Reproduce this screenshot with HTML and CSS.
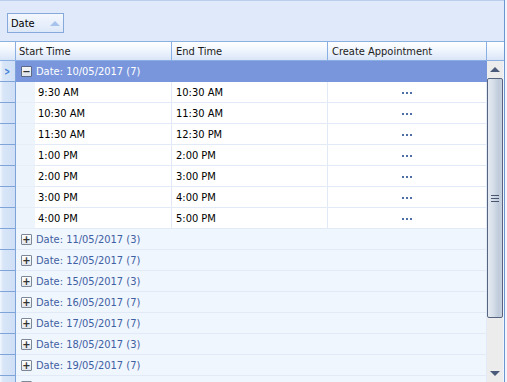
FILE: index.html
```html
<!DOCTYPE html>
<html>
<head>
<meta charset="utf-8">
<link rel="stylesheet" href="styles.css">
</head>
<body>
<div class="grid">
  <div class="group-panel">
    <div class="group-btn"><span>Date</span><span class="tri-up"></span></div>
  </div>
  <div class="header">
    <div class="hcell ind"></div>
    <div class="hcell c1">Start Time</div>
    <div class="hcell c2">End Time</div>
    <div class="hcell c3">Create Appointment</div>
    <div class="hcell sc"></div>
  </div>
  <div class="body">
    <div class="rows">
      <div class="row grp open">
        <div class="ind"><span class="arrow">&gt;</span></div>
        <div class="gcell"><span class="box">&minus;</span>Date: 10/05/2017 (7)</div>
      </div>
      <div class="row data"><div class="ind"></div><div class="indent"></div><div class="dc c1">9:30 AM</div><div class="dc c2">10:30 AM</div><div class="dc c3"><span class="dots"><i></i><i></i><i></i></span></div></div>
      <div class="row data"><div class="ind"></div><div class="indent"></div><div class="dc c1">10:30 AM</div><div class="dc c2">11:30 AM</div><div class="dc c3"><span class="dots"><i></i><i></i><i></i></span></div></div>
      <div class="row data"><div class="ind"></div><div class="indent"></div><div class="dc c1">11:30 AM</div><div class="dc c2">12:30 PM</div><div class="dc c3"><span class="dots"><i></i><i></i><i></i></span></div></div>
      <div class="row data"><div class="ind"></div><div class="indent"></div><div class="dc c1">1:00 PM</div><div class="dc c2">2:00 PM</div><div class="dc c3"><span class="dots"><i></i><i></i><i></i></span></div></div>
      <div class="row data"><div class="ind"></div><div class="indent"></div><div class="dc c1">2:00 PM</div><div class="dc c2">3:00 PM</div><div class="dc c3"><span class="dots"><i></i><i></i><i></i></span></div></div>
      <div class="row data"><div class="ind"></div><div class="indent"></div><div class="dc c1">3:00 PM</div><div class="dc c2">4:00 PM</div><div class="dc c3"><span class="dots"><i></i><i></i><i></i></span></div></div>
      <div class="row data"><div class="ind"></div><div class="indent"></div><div class="dc c1">4:00 PM</div><div class="dc c2">5:00 PM</div><div class="dc c3"><span class="dots"><i></i><i></i><i></i></span></div></div>
      <div class="row grp"><div class="ind"></div><div class="gcell"><span class="box">+</span>Date: 11/05/2017 (3)</div></div>
      <div class="row grp"><div class="ind"></div><div class="gcell"><span class="box">+</span>Date: 12/05/2017 (7)</div></div>
      <div class="row grp"><div class="ind"></div><div class="gcell"><span class="box">+</span>Date: 15/05/2017 (3)</div></div>
      <div class="row grp"><div class="ind"></div><div class="gcell"><span class="box">+</span>Date: 16/05/2017 (7)</div></div>
      <div class="row grp"><div class="ind"></div><div class="gcell"><span class="box">+</span>Date: 17/05/2017 (7)</div></div>
      <div class="row grp"><div class="ind"></div><div class="gcell"><span class="box">+</span>Date: 18/05/2017 (3)</div></div>
      <div class="row grp"><div class="ind"></div><div class="gcell"><span class="box">+</span>Date: 19/05/2017 (7)</div></div>
      <div class="row grp"><div class="ind"></div><div class="gcell"><span class="box"></span></div></div>
    </div>
    <div class="vscroll">
      <div class="sbtn"><span class="up"></span></div>
      <div class="thumb"><span class="grip"><i></i><i></i><i></i></span></div>
      <div class="track"></div>
      <div class="sbtn"><span class="down"></span></div>
    </div>
  </div>
</div>
</body>
</html>
```
FILE: styles.css
```css
html, body {
  margin: 0;
  padding: 0;
  width: 507px;
  height: 382px;
  overflow: hidden;
  background: #f2f6fc;
}
.grid {
  width: 504px;
  height: 382px;
  overflow: hidden;
  border-right: 1px solid #6b95cf;
  font-family: "DejaVu Sans Condensed", "DejaVu Sans", sans-serif;
  font-size: 11px;
  color: #000;
  display: flex;
  flex-direction: column;
}
.group-panel {
  height: 41px;
  flex: none;
  border-top: 1px solid #b9cdec;
  background: #dfe9f9;
  padding: 12px 0 0 7px;
  box-sizing: border-box;
}
.group-btn {
  width: 57px;
  height: 20px;
  box-sizing: border-box;
  border: 1px solid #86a9dc;
  background: linear-gradient(#f4f8fe, #dde8f8);
  display: flex;
  align-items: center;
  padding-left: 3px;
  padding-top: 1px;
  gap: 15px;
}
.tri-up {
  width: 0; height: 0;
  border-left: 5px solid transparent;
  border-right: 5px solid transparent;
  border-bottom: 5px solid #a6c3ec;
}
.header {
  display: flex;
  flex: none;
  height: 20px;
  box-sizing: border-box;
  border-top: 1px solid #8ab0e3;
  border-bottom: 1px solid #8ab0e3;
  background: linear-gradient(#ffffff 0%, #f1f6fe 45%, #d9e5f7 100%);
}
.hcell {
  box-sizing: border-box;
  border-right: 1px solid #8ab0e3;
  line-height: 18px;
  padding-top: 1px;
  white-space: nowrap;
  color: #1b1b1b;
}
.header .ind { width: 16px; }
.header .c1 { width: 156px; padding-left: 3px; }
.header .c2 { width: 156px; padding-left: 4px; }
.header .c3 { width: 159px; padding-left: 4px; }
.header .sc { width: 16px; border-right: none; }
.body {
  display: flex;
  flex: 1;
  overflow: hidden;
}
.rows {
  width: 487px;
  display: flex;
  flex-direction: column;
}
.row {
  display: flex;
  height: 21px;
  flex: none;
}
.row .ind {
  width: 16px;
  height: 21px;
  box-sizing: border-box;
  border-right: 1px solid #7fa4da;
  border-bottom: 1px solid #7fa4da;
  background: linear-gradient(90deg, #f3f8fe 0px, #d9e6f8 3px, #cfdff6 100%);
  position: relative;
}
.arrow {
  position: absolute;
  left: 3px;
  top: 4px;
  color: #3b7fd6;
  font-weight: bold;
  font-size: 11px;
  transform: scaleX(0.7);
}
.gcell {
  flex: 1;
  box-sizing: border-box;
  border-bottom: 1px solid #e1eaf6;
  border-right: 1px solid #e1eaf6;
  background: #f0f6fe;
  color: #3f60a2;
  display: flex;
  align-items: center;
  padding-left: 5px;
  padding-top: 1px;
  white-space: nowrap;
}
.grp.open .gcell {
  background: #7996dc;
  color: #ffffff;
  border-bottom-color: #7996dc;
  border-right-color: #7996dc;
}
.box {
  width: 11px;
  height: 11px;
  box-sizing: border-box;
  border: 1px solid #7c8797;
  border-radius: 1px;
  background: linear-gradient(#ffffff, #e2e6ec);
  color: #333;
  font-size: 10px;
  font-weight: bold;
  line-height: 9px;
  text-align: center;
  margin-right: 4px;
  font-family: "DejaVu Sans", sans-serif;
}
.grp.open .box {
  background: linear-gradient(#f6f7f9, #dfe3ea);
  border-color: #5c6a86;
}
.indent {
  width: 19px;
  box-sizing: border-box;
  background: #eef4fc;
  border-bottom: 1px solid #e8eef8;
}
.dc {
  box-sizing: border-box;
  border-bottom: 1px solid #e1eaf6;
  border-right: 1px solid #e1eaf6;
  background: #fff;
  padding-top: 2px;
  line-height: 18px;
  white-space: nowrap;
}
.data .c1 { width: 137px; padding-left: 3px; }
.data .c2 { width: 156px; padding-left: 4px; }
.data .c3 { width: 159px; display: flex; justify-content: center; align-items: center; }
.dots { display: flex; gap: 2px; }
.dots i {
  width: 2px;
  height: 2px;
  background: #4d6fa6;
}
.vscroll {
  width: 16px;
  display: flex;
  flex-direction: column;
  background: #ececec;
}
.sbtn {
  height: 17px;
  flex: none;
  display: flex;
  align-items: center;
  justify-content: center;
}
.up {
  width: 0; height: 0;
  border-left: 5px solid transparent;
  border-right: 5px solid transparent;
  border-bottom: 5px solid #4a5a7a;
}
.down {
  width: 0; height: 0;
  border-left: 5px solid transparent;
  border-right: 5px solid transparent;
  border-top: 5px solid #4a5a7a;
}
.thumb {
  height: 240px;
  flex: none;
  box-sizing: border-box;
  border: 1px solid #56647f;
  border-radius: 2px;
  background: linear-gradient(90deg, #e6ebf2 0%, #d4dde8 40%, #bfcbdb 75%, #c9d3e0 100%);
  display: flex;
  align-items: center;
  justify-content: center;
}
.grip { display: flex; flex-direction: column; gap: 2px; }
.grip i { width: 8px; height: 1px; background: #4a5670; }
.track { flex: 1; }
```
